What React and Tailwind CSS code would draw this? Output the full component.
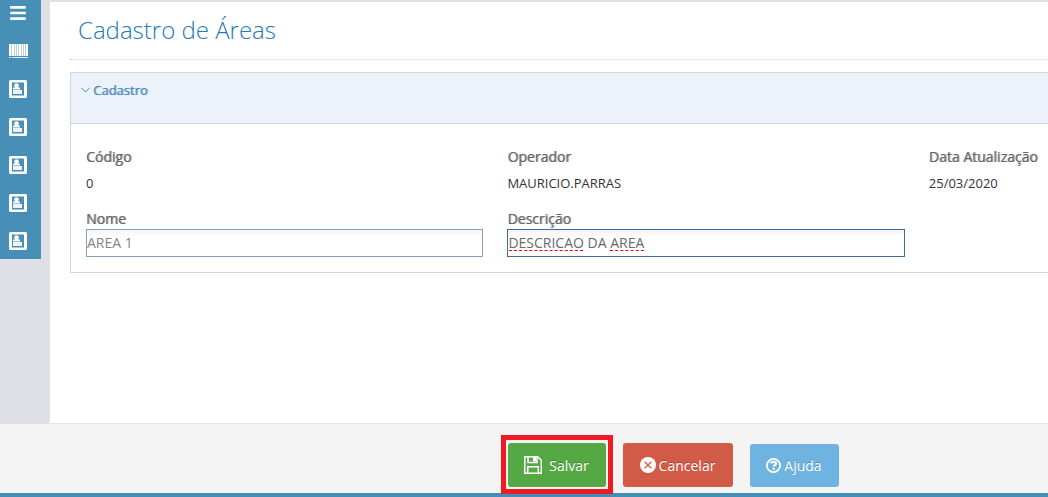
import {FaBars} from "react-icons/fa";

const menuItems = ["Áreas", "Locais", "Equipamentos", "Operadores", "Relatórios"];

const BarcodeIcon = () => (
    <svg width="19" height="14" viewBox="0 0 19 14" fill="#fff" shapeRendering="crispEdges" aria-hidden="true">
        <path d="M0 0h2v12H0zM3 0h2v12H3zM6 0h1v12H6zM8 0h1v12H8zM10 0h2v12h-2zM13 0h1v12h-1zM15 0h1v12h-1zM17 0h2v12h-2z"/>
        <path d="M0 0h19v12H0z" opacity=".6"/>
        <path d="M0 13h2v1H0zM3 13h16v1H3z" opacity=".85"/>
    </svg>
);

const CardIcon = () => (
    <svg width="18" height="18" viewBox="0 0 18 18" fill="#fff" aria-hidden="true">
        <path fillRule="evenodd" d="M1.5 0h15A1.5 1.5 0 0 1 18 1.5v15a1.5 1.5 0 0 1-1.5 1.5h-15A1.5 1.5 0 0 1 0 16.5v-15A1.5 1.5 0 0 1 1.5 0zM3 2.5v13h12v-13z"/>
        <path d="M6 3.500h3v1h1v2H9v1h2v2H4v-2h2v-1H5v-2h1z"/>
        <path d="M4 10h9v4H4z" opacity=".9"/>
    </svg>
);

const SaveIcon = () => (
    <svg width="18" height="18" viewBox="0 0 18 18" fill="none" stroke="#fff" strokeWidth="1.5" aria-hidden="true">
        <path d="M.75.75h13l3.5 3.5v13H.75z"/>
        <path d="M4 1v5.500h9V1M3.750 17v-6.250h10.500V17"/>
        <path d="M9 1h3v4.500H9z" fill="#fff" stroke="none"/>
    </svg>
);

const CancelIcon = () => (
    <svg width="16" height="16" viewBox="0 0 16 16" aria-hidden="true">
        <circle cx="8" cy="8" r="8" fill="#fff"/>
        <path d="M4.7 4.7l6.6 6.6M11.3 4.7l-6.6 6.6" stroke="#d15b47" strokeWidth="1.3"/>
    </svg>
);

const HelpIcon = () => (
    <svg width="15" height="15" viewBox="0 0 15 15" fill="none" stroke="#fff" aria-hidden="true">
        <circle cx="7.5" cy="7.5" r="6.6" strokeWidth="1.8"/>
        <path d="M4.6 5.3c.5-1.1 1.5-1.5 2.9-1.5 1.6 0 2.6.7 2.6 1.8 0 1.5-2.4 1.5-2.4 3.2" strokeWidth="2.2"/>
        <path d="M7.7 9.8v2" strokeWidth="2.2"/>
    </svg>
);

const Sidebar = () => (
    <nav className="w-[41px] shrink-0 self-start bg-[#478fb7]">
        <button type="button" aria-label="Menu" className="flex h-8 w-full items-center justify-center pr-1.5 pb-1.5">
            <FaBars size={18} color="#fff"/>
        </button>
        <a href="#codigo-barras" aria-label="Código de barras" className="flex h-[38px] items-center justify-center pr-1">
            <BarcodeIcon/>
        </a>
        {menuItems.map(item => (
            <a
                key={item}
                href={`#${item.toLowerCase()}`}
                aria-label={item}
                className="flex h-[38px] items-center justify-center pr-1.5 last:h-[37px]"
            >
                <CardIcon/>
            </a>
        ))}
    </nav>
);

const ReadOnlyField = ({label, value}) => (
    <dl>
        <dt className="text-sm leading-5 text-[#666] text-shadow-[1px_0_0_#6669]">{label}</dt>
        <dd className="mt-1.5 mb-0.5 text-[13px] leading-5 text-[#333]">{value}</dd>
    </dl>
);

const App = () => (
    <div className="flex min-h-screen flex-col bg-[#dfe0e5] font-['Open_Sans','Noto_Sans',sans-serif]">
        <div className="flex flex-1">
            <Sidebar/>
            <main className="mt-0.5 ml-[9px] min-w-0 flex-1 bg-white pl-5">
                <h1 className="border-b border-dotted border-[#d5d5d5] pt-3 pb-[13px] pl-2 text-2xl leading-8 font-light text-[#2679b5]">
                    Cadastro de Áreas
                </h1>

                <section className="mt-3 border border-r-0 border-[#cdd8e3]">
                    <h2 className="h-[51px] border-b border-[#cdd8e3] bg-[#edf2fa] pt-[7px] pl-2.5 text-[13px] leading-5 text-[#4787b9]">
                        <button type="button" className="flex items-center gap-[3px] text-shadow-[1px_0_0_#4787b999]">
                            <svg width="9" height="6" viewBox="0 0 9 6" fill="none" stroke="currentColor" aria-hidden="true">
                                <path d="M.5 1l4 4 4-4"/>
                            </svg>
                            Cadastro
                        </button>
                    </h2>

                    <form id="cadastro" className="grid grid-cols-[10fr_10fr_3fr] gap-x-6 gap-y-3.5 pt-[23px] pb-[15px] pl-[15px]">
                        <ReadOnlyField label="Código" value="0"/>
                        <ReadOnlyField label="Operador" value="MAURICIO.PARRAS"/>
                        <div className="whitespace-nowrap">
                            <ReadOnlyField label="Data Atualização" value="25/03/2020"/>
                        </div>

                        <div>
                            <label htmlFor="nome" className="block text-sm leading-5 text-[#666] text-shadow-[1px_0_0_#6669]">Nome</label>
                            <input
                                id="nome"
                                defaultValue="AREA 1"
                                className="block h-7 w-full border border-[#859fbf] bg-linear-to-b from-[#f5f5f5] to-white to-30% pb-0.5 text-sm text-[#858585] outline-none"
                            />
                        </div>
                        <div className="relative">
                            <label htmlFor="descricao" className="block text-sm leading-5 text-[#666] text-shadow-[1px_0_0_#6669]">Descrição</label>
                            <input
                                id="descricao"
                                defaultValue="DESCRICAO DA AREA"
                                className="block h-7 w-full border border-[#3b6a9b] bg-linear-to-b from-[#f5f5f5] to-white to-30% pb-0.5 text-sm text-[#696969] outline-none"
                            />
                            {/* spelling marks */}
                            <div className="pointer-events-none absolute bottom-1.5 left-0.5 flex gap-[27px]" aria-hidden="true">
                                <span className="w-[74px] border-b border-dashed border-[#f00]"/>
                                <span className="w-[34px] border-b border-dashed border-[#f00]"/>
                            </div>
                        </div>
                    </form>
                </section>
            </main>
        </div>

        <footer className="flex items-end justify-center gap-[17px] border-t border-b-4 border-t-[#e5e5e5] border-b-[#438eb9] bg-[#f4f4f4] pt-[19px] pb-1.5 pl-[298px] text-sm text-white">
            {/* highlighted action: the frame spills over the footer's bottom line */}
            <div className="-mx-[7px] -mt-2 -mb-[7px] border-5 border-[#ed1c24] px-0.5 pt-[3px] pb-0.5">
                <button
                    type="submit"
                    form="cadastro"
                    className="flex h-11 w-[98px] items-center justify-center gap-[7px] rounded-[3px] bg-[#55a945] text-shadow-[0_-1px_0_rgb(0_0_0/0.25)]"
                >
                    <SaveIcon/>
                    <span className="pt-0.5">Salvar</span>
                </button>
            </div>
            <button type="button" className="flex h-11 w-[110px] items-center justify-center gap-[3px] rounded-[3px] bg-[#d15b47] text-shadow-[0_-1px_0_rgb(0_0_0/0.25)]">
                <CancelIcon/>
                <span className="pt-0.5">Cancelar</span>
            </button>
            <button type="button" className="flex h-[43px] w-[89px] items-center justify-center gap-[3px] rounded-[3px] bg-[#6fb3e0] text-shadow-[0_-1px_0_rgb(0_0_0/0.25)]">
                <HelpIcon/>
                Ajuda
            </button>
        </footer>
    </div>
);

export default App;
